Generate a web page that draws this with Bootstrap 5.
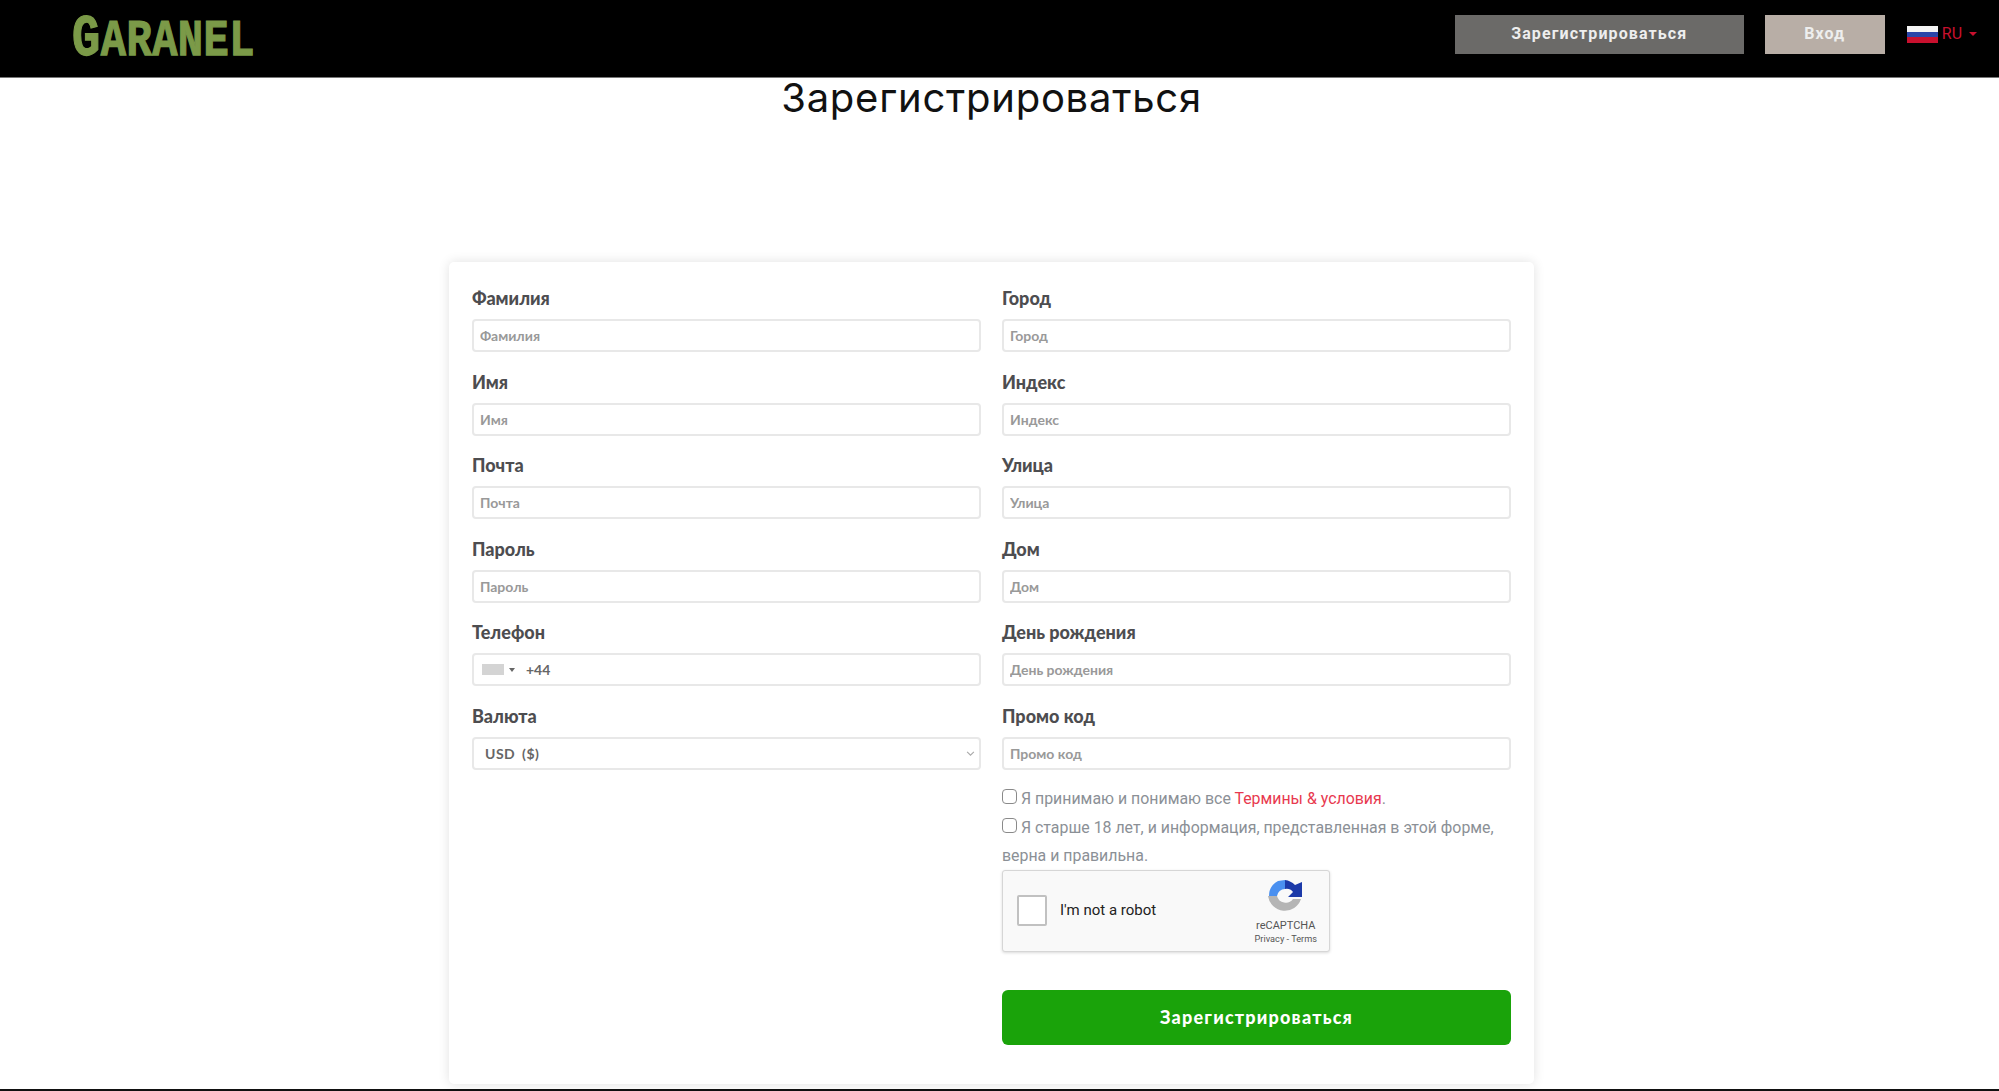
<!DOCTYPE html>
<html lang="ru">

<head>
    <meta charset="UTF-8">
    <meta name="viewport" content="width=device-width, initial-scale=1.0">
    <title>Зарегистрироваться | Garanel</title>

    <link rel="stylesheet" href="https://cdn.jsdelivr.net/npm/bootstrap@5.3.0/dist/css/bootstrap.min.css">

    <style>
        html, body {
            height: 1091px;
            overflow: hidden;
        }

        body {
            font-family: "Lato", "Noto Sans", sans-serif;
            background-color: #fff;
        }

        .top-bar {
            height: 78px;
            background-color: #000;
            border-bottom: 1px solid #777;
            padding: 0 22px 0 72px;
        }

        .logo-text {
            display: inline-block;
            font-family: "Liberation Mono", monospace;
            font-weight: 700;
            font-size: 42px;
            line-height: 1;
            letter-spacing: 0.5px;
            color: #7b9a48;
            text-decoration: none;
            transform: scaleY(1.25);
            margin-bottom: -1px;
            -webkit-text-stroke: 1px #7b9a48;
        }

        .logo-text b {
            font-size: 47px;
        }

        .top-btn {
            height: 39px;
            border: 0;
            border-radius: 0;
            color: #eee;
            font-family: "Roboto", sans-serif;
            font-weight: 700;
            font-size: 16px;
            letter-spacing: 1.1px;
            padding: 0;
            display: flex;
            align-items: center;
            justify-content: center;
        }

        .top-btn:hover {
            color: #fff;
        }

        .btn-reg {
            width: 289px;
            background-color: #6b6a68;
            margin-right: 21px;
        }

        .btn-reg:hover {
            background-color: #6b6a68;
        }

        .btn-login {
            width: 120px;
            background-color: #b8aea6;
            margin-right: 22px;
        }

        .btn-login:hover {
            background-color: #b8aea6;
        }

        .top-actions {
            margin-bottom: 9px;
        }

        .lang-toggle {
            color: #c8102e;
            font-family: "Roboto", sans-serif;
            font-size: 16px;
            text-decoration: none;
        }

        .lang-toggle::after {
            display: inline-block;
            content: "";
            margin-left: 3px;
            border-top: 4px solid #c8102e;
            border-left: 4px solid transparent;
            border-right: 4px solid transparent;
        }

        .page-body {
            padding-right: 16px;
        }

        .page-title {
            font-family: "Inter", sans-serif;
            font-weight: 400;
            font-size: 40px;
            line-height: 48px;
            letter-spacing: 0.75px;
            color: #111;
            margin: -4px 0 140px;
        }

        .form-box {
            width: 1085px;
            height: 822px;
            padding: 24px 23px 0;
            border: 0;
            border-radius: 5px;
            box-shadow: 0 0 12px rgba(0, 0, 0, 0.12);
        }

        .form-box .row {
            --bs-gutter-x: 21px;
        }

        .field-box {
            height: 83.5px;
        }

        .field-label {
            display: block;
            font-weight: 900;
            font-size: 18px;
            line-height: 24px;
            color: #4d4d50;
            margin-bottom: 9px;
        }

        .field-input {
            height: 33px;
            padding: 0 6px;
            border: 2px solid #e8e8e8;
            border-radius: 4px;
            font-weight: 700;
            font-size: 14px;
            color: #666;
        }

        .field-input::placeholder {
            color: #999;
        }

        .currency-select {
            height: 33px;
            padding: 0 11px;
            border: 2px solid #e8e8e8;
            border-radius: 4px;
            font-weight: 700;
            font-size: 14px;
            word-spacing: 3px;
            letter-spacing: 0.5px;
            color: #666;
            background-image: url("data:image/svg+xml,%3csvg xmlns='http://www.w3.org/2000/svg' viewBox='0 0 16 16'%3e%3cpath fill='none' stroke='%23aaa' stroke-width='2' d='M2 5l6 6 6-6'/%3e%3c/svg%3e");
            background-size: 11px 9px;
            background-position: right 3px center;
        }

        .phone-wrap {
            position: relative;
        }

        .phone-wrap .field-input {
            padding-left: 52px;
        }

        .phone-flag {
            position: absolute;
            left: 10px;
            top: 11px;
            display: flex;
            align-items: center;
            gap: 5px;
        }

        .flag-blank {
            width: 22px;
            height: 11px;
            background-color: #d4d4d4;
        }

        .flag-caret {
            border-top: 4px solid #666;
            border-left: 3px solid transparent;
            border-right: 3px solid transparent;
        }

        .terms-block {
            margin-top: -2px;
        }

        .terms-line {
            font-family: "Roboto", sans-serif;
            font-size: 15.9px;
            line-height: 28.5px;
            color: #8b9096;
        }

        .terms-line a {
            color: #e8394f;
            text-decoration: none;
        }

        .terms-check {
            width: 15px;
            height: 15px;
            margin: 0;
            vertical-align: 0;
            border: 1px solid #8a8a8a;
            border-radius: 3px;
        }

        .captcha-box {
            width: 328px;
            height: 82px;
            margin-top: -1px;
            padding: 0 12px 0 14px;
            background-color: #f9f9f9;
            border: 1px solid #d6d6d6;
            border-radius: 3px;
            box-shadow: 0 1px 3px rgba(0, 0, 0, 0.15);
        }

        .captcha-tick {
            width: 30px;
            height: 31px;
            background-color: #fff;
            border: 2px solid #c1c1c1;
            border-radius: 2px;
            margin-right: 13px;
        }

        .captcha-text {
            font-family: "Roboto", sans-serif;
            font-size: 15px;
            color: #222;
        }

        .captcha-brand {
            font-family: "Roboto", sans-serif;
            font-size: 11px;
            line-height: 1.1;
            color: #555;
            text-align: center;
            padding-top: 2px;
        }

        .captcha-logo {
            display: block;
            margin: 0 auto 7px;
        }

        .captcha-links {
            font-size: 9.2px;
            margin-top: 2px;
        }

        .submit-btn {
            height: 55px;
            margin-top: 38px;
            background-color: #1aa30a;
            border: 0;
            border-radius: 6px;
            font-weight: 900;
            font-size: 18px;
            letter-spacing: 1.2px;
        }

        .submit-btn:hover {
            background-color: #1aa30a;
        }

        .bottom-line {
            height: 3px;
            margin-top: 5px;
            background-color: #111;
        }
    </style>
</head>

<body>

    <header class="top-bar d-flex align-items-center">
        <a href="#" class="logo-text"><b>G</b>ARANEL</a>
        <div class="ms-auto d-flex align-items-center top-actions">
            <a href="#" class="btn top-btn btn-reg">Зарегистрироваться</a>
            <a href="#" class="btn top-btn btn-login">Вход</a>
            <a href="#" class="lang-toggle d-flex align-items-center gap-1">
                <svg width="31" height="17" viewBox="0 0 31 17">
                    <rect width="31" height="6" fill="#f4f4f4" />
                    <rect y="6" width="31" height="5" fill="#2a45a8" />
                    <rect y="11" width="31" height="6" fill="#c8102e" />
                </svg>
                RU
            </a>
        </div>
    </header>

    <main class="page-body">
        <h1 class="page-title text-center">Зарегистрироваться</h1>

        <form class="card form-box mx-auto">
            <div class="row">
                <div class="col-6">
                    <div class="field-box">
                        <label class="field-label">Фамилия</label>
                        <input type="text" class="form-control field-input" placeholder="Фамилия">
                    </div>
                    <div class="field-box">
                        <label class="field-label">Имя</label>
                        <input type="text" class="form-control field-input" placeholder="Имя">
                    </div>
                    <div class="field-box">
                        <label class="field-label">Почта</label>
                        <input type="text" class="form-control field-input" placeholder="Почта">
                    </div>
                    <div class="field-box">
                        <label class="field-label">Пароль</label>
                        <input type="text" class="form-control field-input" placeholder="Пароль">
                    </div>
                    <div class="field-box">
                        <label class="field-label">Телефон</label>
                        <div class="phone-wrap">
                            <div class="phone-flag">
                                <span class="flag-blank"></span>
                                <span class="flag-caret"></span>
                            </div>
                            <input type="text" class="form-control field-input" value="+44">
                        </div>
                    </div>
                    <div class="field-box">
                        <label class="field-label">Валюта</label>
                        <select class="form-select currency-select">
                            <option>USD ($)</option>
                        </select>
                    </div>
                </div>

                <div class="col-6">
                    <div class="field-box">
                        <label class="field-label">Город</label>
                        <input type="text" class="form-control field-input" placeholder="Город">
                    </div>
                    <div class="field-box">
                        <label class="field-label">Индекс</label>
                        <input type="text" class="form-control field-input" placeholder="Индекс">
                    </div>
                    <div class="field-box">
                        <label class="field-label">Улица</label>
                        <input type="text" class="form-control field-input" placeholder="Улица">
                    </div>
                    <div class="field-box">
                        <label class="field-label">Дом</label>
                        <input type="text" class="form-control field-input" placeholder="Дом">
                    </div>
                    <div class="field-box">
                        <label class="field-label">День рождения</label>
                        <input type="text" class="form-control field-input" placeholder="День рождения">
                    </div>
                    <div class="field-box">
                        <label class="field-label">Промо код</label>
                        <input type="text" class="form-control field-input" placeholder="Промо код">
                    </div>

                    <div class="terms-block">
                        <div class="terms-line">
                            <input type="checkbox" class="form-check-input terms-check">
                            Я принимаю и понимаю все <a href="#">Термины &amp; условия</a>.
                        </div>
                        <div class="terms-line">
                            <input type="checkbox" class="form-check-input terms-check">
                            Я старше 18 лет, и информация, представленная в этой форме, верна и правильна.
                        </div>
                    </div>

                    <div class="captcha-box d-flex align-items-center">
                        <span class="captcha-tick"></span>
                        <span class="captcha-text">I'm not a robot</span>
                        <div class="ms-auto captcha-brand">
                            <svg width="36" height="34" viewBox="0 0 36 34" class="captcha-logo">
                                <path d="M0 17 L9 17 A9 9 0 0 0 25 20 L33 20 A17 17 0 0 1 0 17 Z" fill="#b5b5b5" />
                                <path d="M1 17 A17 17 0 0 1 10 2 L17 1 L17 10 A8 8 0 0 0 9 17 Z" fill="#4a90f0" />
                                <path d="M17 1 A17 17 0 0 1 27 6 L34 3 L34 18 L20 18 L25 13 A8 8 0 0 0 17 10 Z" fill="#1c3aa9" />
                            </svg>
                            reCAPTCHA
                            <div class="captcha-links">Privacy - Terms</div>
                        </div>
                    </div>

                    <button type="button" class="btn btn-success w-100 submit-btn">Зарегистрироваться</button>
                </div>
            </div>
        </form>
    </main>

    <div class="bottom-line"></div>

</body>

</html>
